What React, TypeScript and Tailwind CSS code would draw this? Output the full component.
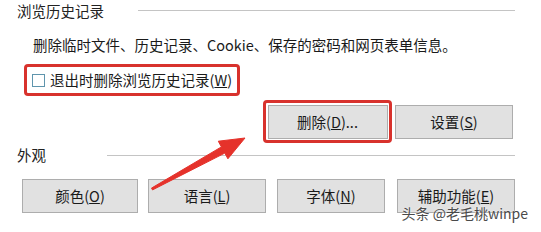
import React from "react";

const font = { fontFamily: '"Noto Sans CJK SC", "Noto Sans", sans-serif' };

function Btn({ w, children }: { w: string; children: React.ReactNode }) {
  return (
    <div
      className={`${w} h-[34px] flex items-center justify-center bg-[#e1e1e1] border border-[#adadad] text-[14.5px] text-[#1a1a1a]`}
    >
      {children}
    </div>
  );
}

export default function App() {
  return (
    <div
      className="relative w-[541px] h-[232px] bg-white overflow-hidden text-[#1a1a1a] flex flex-col"
      style={font}
    >
      <div className="flex items-center h-[22px] pl-[17px] pr-[26px]">
        <span className="text-[14.5px] leading-none text-[#222]">浏览历史记录</span>
        <div className="flex-1 ml-[34px] h-px bg-[#c4c4c4] mt-[-2px]" />
      </div>
      <div className="mt-[13px] h-[20px] pl-[33px] flex items-center text-[14.5px] leading-none">
        删除临时文件、历史记录、Cookie、保存的密码和网页表单信息。
      </div>
      <div className="mt-[9px] ml-[24px] w-[216px] h-[32px] border-[3px] border-[#d8322d] rounded-[4px] flex items-center pl-[5px]">
        <div className="w-[13px] h-[13px] border border-[#5f95ad] bg-white" />
        <span className="ml-[5px] text-[14.5px] leading-none whitespace-nowrap">
          退出时删除浏览历史记录(<span className="underline">W</span>)
        </span>
      </div>
      <div className="mt-[4px] flex justify-end items-center pr-[28px]">
        <div className="w-[129px] h-[43px] border-[3px] border-[#d8322d] rounded-[4px] flex items-center justify-center">
          <Btn w="w-[120px]">
            删除(<span className="underline">D</span>)...
          </Btn>
        </div>
        <div className="ml-[3px]">
          <Btn w="w-[118px]">
            设置(<span className="underline">S</span>)
          </Btn>
        </div>
      </div>
      <div className="mt-[1px] flex items-center h-[22px] pl-[17px] pr-[26px]">
        <span className="text-[14.5px] leading-none text-[#222]">外观</span>
        <div className="flex-1 ml-[61px] h-px bg-[#c4c4c4]" />
      </div>
      <div className="mt-[13px] flex items-center pl-[22px]">
        <Btn w="w-[116px]">
          颜色(<span className="underline">O</span>)
        </Btn>
        <div className="ml-[10px]">
          <Btn w="w-[118px]">
            语言(<span className="underline">L</span>)
          </Btn>
        </div>
        <div className="ml-[11px]">
          <Btn w="w-[108px]">
            字体(<span className="underline">N</span>)
          </Btn>
        </div>
        <div className="ml-[12px]">
          <Btn w="w-[118px]">
            辅助功能(<span className="underline">E</span>)
          </Btn>
        </div>
      </div>
      <svg
        className="absolute left-0 top-0 pointer-events-none"
        width="541"
        height="232"
        viewBox="0 0 541 232"
      >
        <polygon
          points="151.5,188.1 221.4,146.9 218.3,141.2 245,138 227.9,158.8 224.8,153.1 152.5,189.9"
          fill="#e5322b"
          stroke="#e5322b"
          strokeWidth="1"
          strokeLinejoin="round"
        />
      </svg>
      <div
        className="absolute right-[13px] top-[203px] text-[14px] leading-[20px] text-[#4a4a4a] whitespace-nowrap"
        style={{ textShadow: "0 0 2px #fff" }}
      >
        头条 @老毛桃winpe
      </div>
    </div>
  );
}
